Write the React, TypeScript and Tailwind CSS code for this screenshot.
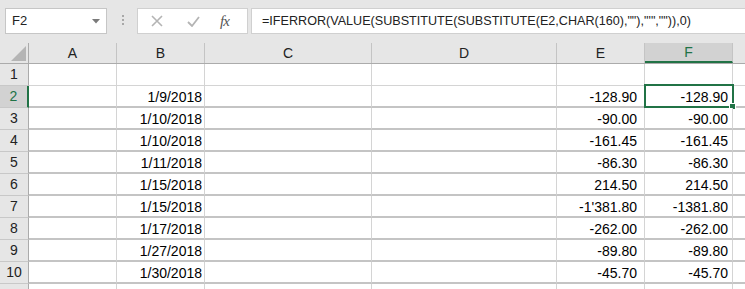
import React from "react";

const colWidths = ["w-[88px]", "w-[88px]", "w-[167px]", "w-[185px]", "w-[88px]", "w-[88px]"];
const letters = ["A", "B", "C", "D", "E", "F"];

const data: [string, string][] = [
  ["1/9/2018", "-128.90"],
  ["1/10/2018", "-90.00"],
  ["1/10/2018", "-161.45"],
  ["1/11/2018", "-86.30"],
  ["1/15/2018", "214.50"],
  ["1/15/2018", "-1'381.80"],
  ["1/17/2018", "-262.00"],
  ["1/27/2018", "-89.80"],
  ["1/30/2018", "-45.70"],
];
const fvals = ["-128.90", "-90.00", "-161.45", "-86.30", "214.50", "-1381.80", "-262.00", "-89.80", "-45.70"];

function Toolbar() {
  return (
    <div className="h-[43px] flex items-start pt-[8px] pl-[5px]">
      <div className="w-[102px] h-[26px] bg-white border border-[#c6c6c6] flex items-center pl-[6px] pr-[6px] justify-between">
        <span className="text-[13px] text-[#222]">F2</span>
        <svg width="8" height="5" viewBox="0 0 8 5">
          <path d="M0 0 L8 0 L4 4.5 Z" fill="#7a7a7a" />
        </svg>
      </div>
      <div className="ml-[15px] mt-[7px] flex flex-col gap-[2px]">
        <div className="w-[2px] h-[2px] bg-[#a8a8a8]" />
        <div className="w-[2px] h-[2px] bg-[#a8a8a8]" />
        <div className="w-[2px] h-[2px] bg-[#a8a8a8]" />
      </div>
      <div className="ml-[13px] w-[111px] h-[26px] bg-white border border-[#d0d0d0] flex items-center">
        <svg className="ml-[13px]" width="12" height="12" viewBox="0 0 12 12">
          <path d="M1 1 L11 11 M11 1 L1 11" stroke="#b4b4b4" strokeWidth="1.6" />
        </svg>
        <svg className="ml-[24px]" width="13" height="11" viewBox="0 0 13 11">
          <path d="M1 6 L5 10 L12 1" stroke="#b4b4b4" strokeWidth="1.8" fill="none" />
        </svg>
        <span className="ml-[20px] text-[15px] italic text-[#555] font-['Liberation_Serif',serif] tracking-[-1px]">fx</span>
      </div>
      <div className="ml-[3px] flex-1 h-[26px] bg-white border border-r-0 border-[#d0d0d0] flex items-center pl-[10px]">
        <span className="text-[12.6px] text-[#222] whitespace-nowrap">
          =IFERROR(VALUE(SUBSTITUTE(SUBSTITUTE(E2,CHAR(160),""),"'","")),0)
        </span>
      </div>
    </div>
  );
}

function Header() {
  return (
    <div className="h-[21px] flex border-b border-[#ababab]">
      <div className="w-[29px] h-full border-r border-[#ababab] relative flex items-end justify-end pr-[2px] pb-[2px]">
        <svg width="15" height="15" viewBox="0 0 15 15">
          <path d="M15 0 L15 15 L0 15 Z" fill="#b5b5b5" />
        </svg>
      </div>
      {letters.map((l, i) => {
        const sel = l === "F";
        return (
          <div
            key={l}
            className={`${colWidths[i]} h-full border-r border-[#c4c4c4] flex items-center justify-center text-[14px] ${
              sel ? "bg-[#d2d2d2] text-[#217346] border-b-2 border-b-[#217346] h-[22px]" : "text-[#222]"
            }`}
          >
            {l}
          </div>
        );
      })}
      <div className="flex-1 h-full" />
    </div>
  );
}

function Row({ n, b, e, f }: { n: number; b?: string; e?: string; f?: string }) {
  const first = n === 1;
  const sel = n === 2;
  const bb = first ? "border-b border-b-[#d4d4d4]" : "border-b-2 border-b-[#c4c4c4]";
  const cell = `h-full border-r border-r-[#d4d4d4] ${bb} bg-white flex items-end justify-end pb-[1px] text-[14px] leading-[16px] text-black`;
  return (
    <div className="h-[22px] flex">
      <div
        className={`w-[29px] h-full border-b border-b-[#c8c8c8] flex items-center justify-center text-[14px] ${
          sel ? "bg-[#d2d2d2] text-[#217346] border-r-2 border-r-[#217346]" : "text-[#222] border-r border-r-[#ababab]"
        }`}
      >
        {n}
      </div>
      <div className={`${colWidths[0]} ${cell}`} />
      <div className={`${colWidths[1]} ${cell} pr-[2px]`}>{b}</div>
      <div className={`${colWidths[2]} ${cell}`} />
      <div className={`${colWidths[3]} ${cell}`} />
      <div className={`${colWidths[4]} ${cell} pr-[7px]`}>{e}</div>
      <div className={`${colWidths[5]} ${cell} pr-[4px] relative`}>
        {f}
        {sel && (
          <>
            <div className="absolute left-[-1px] top-[-2px] w-[90px] h-[24px] border-2 border-[#217346]" />
            <div className="absolute left-[84px] top-[17px] w-[7px] h-[7px] bg-[#217346] border border-white" />
          </>
        )}
      </div>
      <div className={`flex-1 ${bb} h-full bg-white`} />
    </div>
  );
}

export default function App() {
  return (
    <div className="w-[745px] h-[289px] overflow-hidden bg-[#e6e6e6] font-['Liberation_Sans',Arial,sans-serif]">
      <Toolbar />
      <Header />
      <Row n={1} />
      {data.map(([b, e], i) => (
        <Row key={i} n={i + 2} b={b} e={e} f={fvals[i]} />
      ))}
      <div className="h-[22px] flex">
        <div className="w-[29px] h-full border-r border-r-[#ababab]" />
        <div className="flex-1 bg-white flex h-full">
          {colWidths.map((w, i) => (
            <div key={i} className={`${w} h-full border-r border-r-[#d4d4d4]`} />
          ))}
        </div>
      </div>
    </div>
  );
}
